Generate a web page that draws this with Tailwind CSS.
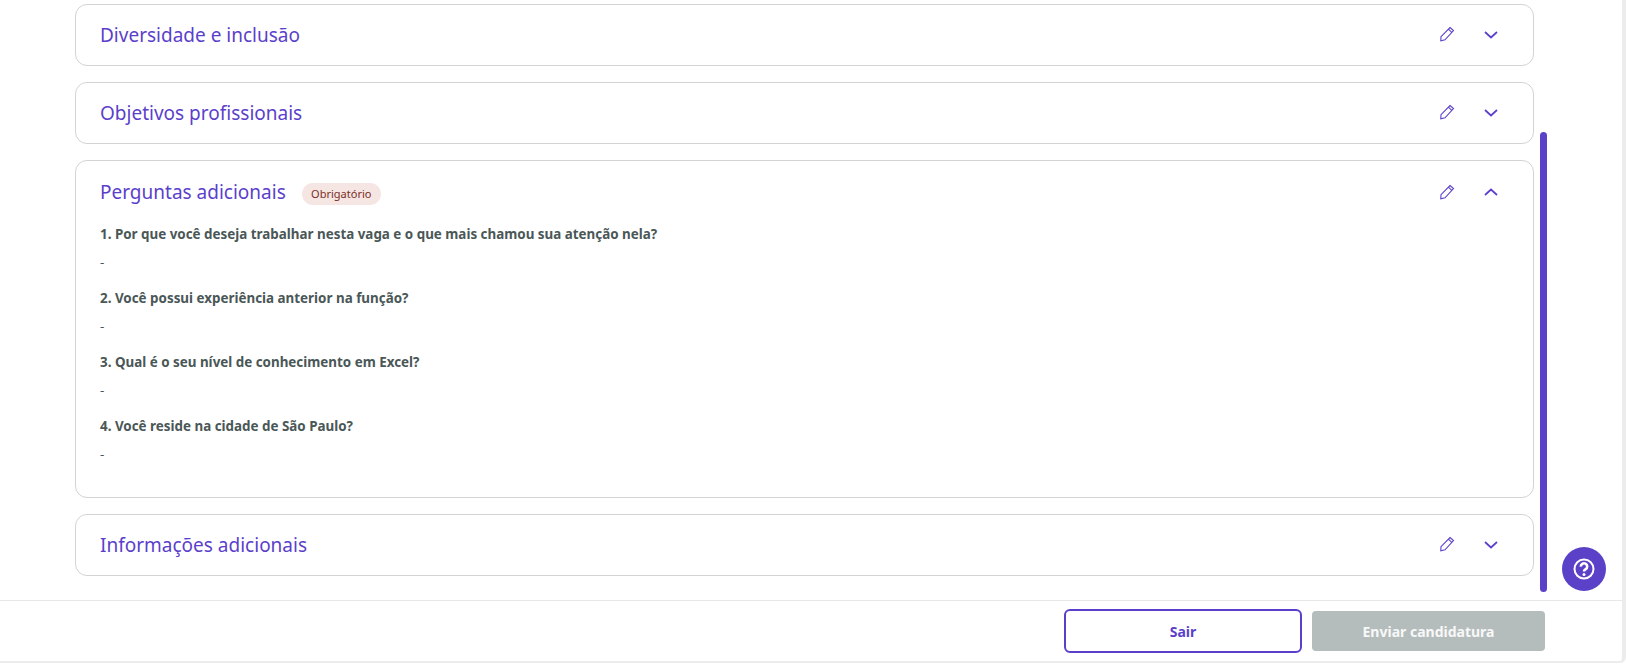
<!DOCTYPE html>
<html lang="pt-BR"><head><meta charset="utf-8">
<script src="https://cdn.jsdelivr.net/npm/@tailwindcss/browser@4"></script>
</head>
<body class="bg-white">
<div class="relative w-[1626px] h-[664px] overflow-hidden bg-white font-['Noto_Sans',sans-serif]">
  <div class="w-[1622px] h-[661px] border-r-4 border-b-2 border-[#ececec] rounded-br-[6px] box-content flex flex-col">
    <main class="h-[600px] pl-[75px] pt-[4px] flex flex-col gap-[16px]">
      <section class="w-[1459px] h-[62px] border border-[#d3d3d3] rounded-[12px] pl-[24px] pr-[35px] flex items-center justify-between">
        <h2 class="text-[19px] text-[#5b3fcb] leading-none">Diversidade e inclusão</h2>
        <div class="flex items-center gap-[29px]">
          <svg class="w-[16px] h-[16px] -mt-[2px]" viewBox="0 0 16 16" fill="none" stroke="#5b3fcb" stroke-width="1.1"><path d="M11 1.5l3.5 3L6 13.8 1.8 14.7l.2-4z M9.4 3.2l3.4 3.1"/></svg>
          <svg class="w-[14px] h-[8px]" viewBox="0 0 14 8" fill="none" stroke="#5b3fcb" stroke-width="1.7"><path d="M1 1l6 5.5L13 1"/></svg>
        </div>
      </section>
      <section class="w-[1459px] h-[62px] border border-[#d3d3d3] rounded-[12px] pl-[24px] pr-[35px] flex items-center justify-between">
        <h2 class="text-[19px] text-[#5b3fcb] leading-none">Objetivos profissionais</h2>
        <div class="flex items-center gap-[29px]">
          <svg class="w-[16px] h-[16px] -mt-[2px]" viewBox="0 0 16 16" fill="none" stroke="#5b3fcb" stroke-width="1.1"><path d="M11 1.5l3.5 3L6 13.8 1.8 14.7l.2-4z M9.4 3.2l3.4 3.1"/></svg>
          <svg class="w-[14px] h-[8px]" viewBox="0 0 14 8" fill="none" stroke="#5b3fcb" stroke-width="1.7"><path d="M1 1l6 5.5L13 1"/></svg>
        </div>
      </section>
      <section class="w-[1459px] h-[338px] border border-[#d3d3d3] rounded-[12px] pl-[24px] pr-[35px] pt-[21px]">
        <div class="h-[21px] flex items-center justify-between">
          <div class="flex items-center">
            <h2 class="text-[19px] text-[#5b3fcb] leading-none">Perguntas adicionais</h2>
            <span class="ml-[16px] mt-[3px] w-[79px] h-[22px] rounded-full bg-[#f5e6e4] text-[#7a2e24] text-[11px] flex items-center justify-center">Obrigatório</span>
          </div>
          <div class="flex items-center gap-[29px]">
            <svg class="w-[16px] h-[16px] -mt-[2px]" viewBox="0 0 16 16" fill="none" stroke="#5b3fcb" stroke-width="1.1"><path d="M11 1.5l3.5 3L6 13.8 1.8 14.7l.2-4z M9.4 3.2l3.4 3.1"/></svg>
            <svg class="w-[14px] h-[8px] -mt-[1px]" viewBox="0 0 14 8" fill="none" stroke="#5b3fcb" stroke-width="1.7"><path d="M1 7l6-5.5L13 7"/></svg>
          </div>
        </div>
        <div class="mt-[21px] flex flex-col gap-[16px] text-[13.4px] text-[#4a5757] leading-[20px]">
          <div class="flex flex-col gap-[8px]"><p class="font-bold">1. Por que você deseja trabalhar nesta vaga e o que mais chamou sua atenção nela?</p><p>-</p></div>
          <div class="flex flex-col gap-[8px]"><p class="font-bold">2. Você possui experiência anterior na função?</p><p>-</p></div>
          <div class="flex flex-col gap-[8px]"><p class="font-bold">3. Qual é o seu nível de conhecimento em Excel?</p><p>-</p></div>
          <div class="flex flex-col gap-[8px]"><p class="font-bold">4. Você reside na cidade de São Paulo?</p><p>-</p></div>
        </div>
      </section>
      <section class="w-[1459px] h-[62px] border border-[#d3d3d3] rounded-[12px] pl-[24px] pr-[35px] flex items-center justify-between">
        <h2 class="text-[19px] text-[#5b3fcb] leading-none">Informações adicionais</h2>
        <div class="flex items-center gap-[29px]">
          <svg class="w-[16px] h-[16px] -mt-[2px]" viewBox="0 0 16 16" fill="none" stroke="#5b3fcb" stroke-width="1.1"><path d="M11 1.5l3.5 3L6 13.8 1.8 14.7l.2-4z M9.4 3.2l3.4 3.1"/></svg>
          <svg class="w-[14px] h-[8px]" viewBox="0 0 14 8" fill="none" stroke="#5b3fcb" stroke-width="1.7"><path d="M1 1l6 5.5L13 1"/></svg>
        </div>
      </section>
    </main>
    <footer class="h-[61px] border-t border-[#e8e8e8] pl-[1064px] flex items-center gap-[10px]">
      <button class="w-[238px] h-[44px] rounded-[6px] border-2 border-[#5b3fcb] text-[#5b3fcb] text-[14px] font-bold">Sair</button>
      <button class="w-[233px] h-[40px] rounded-[4px] bg-[#b4bcbc] text-white/90 text-[14px] font-bold">Enviar candidatura</button>
    </footer>
  </div>
  <div class="absolute left-[1540px] top-[132px] w-[7px] h-[460px] rounded-full bg-[#5a41c8]"></div>
  <div class="absolute left-[1562px] top-[547px] w-[44px] h-[44px] rounded-full bg-[#5a41c8] flex items-center justify-center">
    <svg class="w-[22px] h-[22px]" viewBox="0 0 22 22" fill="none" stroke="#fff" stroke-width="2"><circle cx="11" cy="11" r="9.5"/><path d="M7.8 8.6a3.2 3.2 0 1 1 4.9 2.6c-1 .6-1.7 1.2-1.7 2.4" stroke-width="2.6"/><circle cx="11" cy="16.6" r="1.5" fill="#fff" stroke="none"/></svg>
  </div>
</div>
</body></html>
